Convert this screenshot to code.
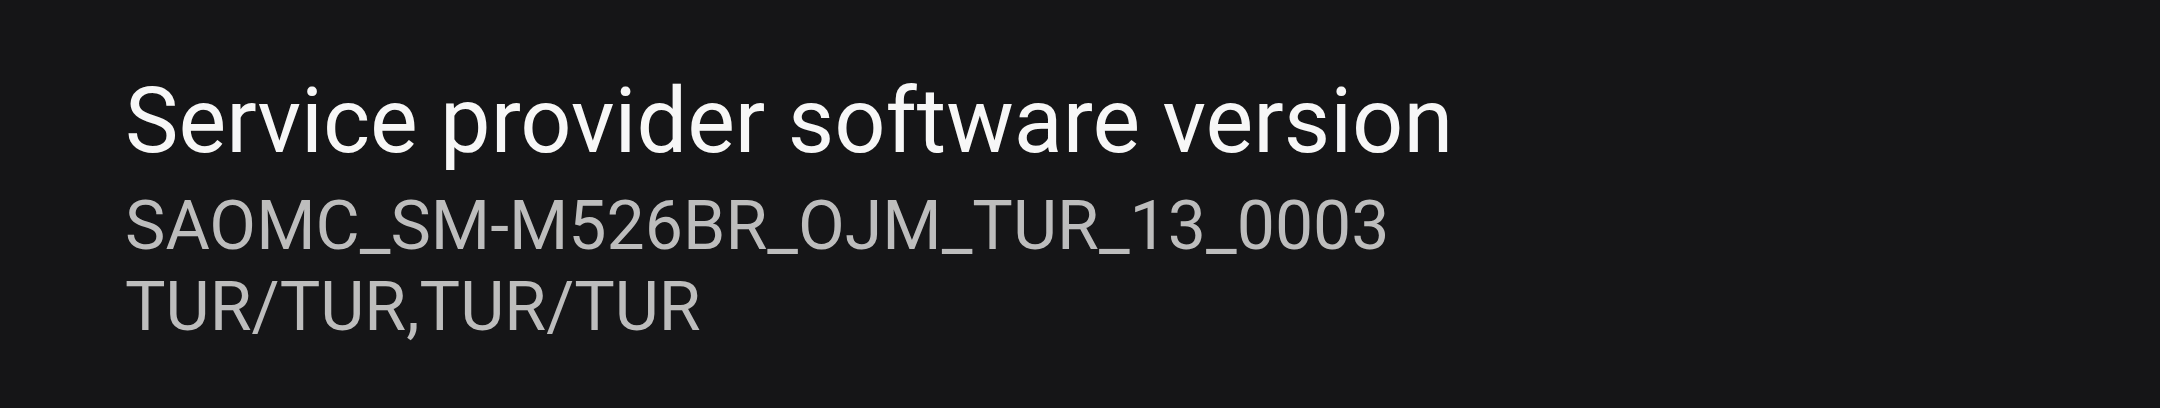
export default function App() {
  return (
    <div className="w-[2160px] h-[408px] bg-[#151517] pl-[125px] pt-[68px] font-['Roboto',sans-serif]">
      <div className="text-[90px] leading-[108px] text-[#f7f7f7]">Service provider software version</div>
      <div className="mt-[10px] text-[68px] leading-[81px] text-[#bdbdbd]">
        <div>SAOMC_SM-M526BR_OJM_TUR_13_0003</div>
        <div>TUR/TUR,TUR/TUR</div>
      </div>
    </div>
  );
}
